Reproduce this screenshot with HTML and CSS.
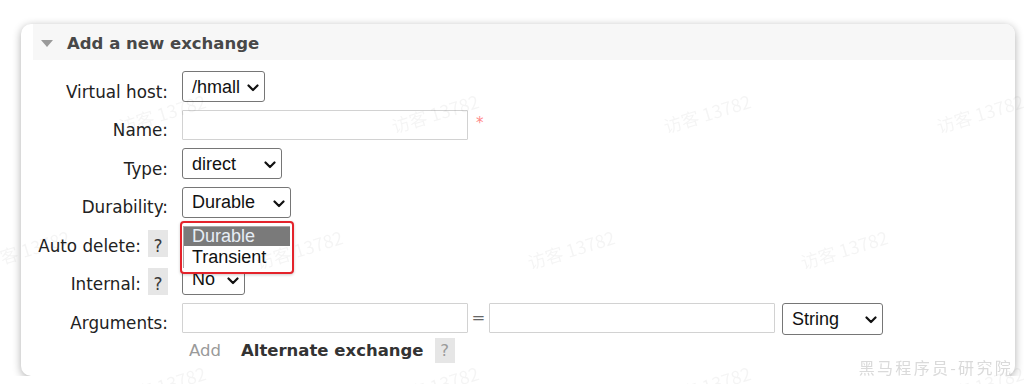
FILE: index.html
```html
<!DOCTYPE html>
<html lang="en">
<head>
<meta charset="utf-8">
<title>Add a new exchange</title>
<link rel="stylesheet" href="styles.css">
</head>
<body>
<div class="card">
  <div class="hdr"><span class="tri"></span><h2>Add a new exchange</h2></div>
  <div class="form">
    <div class="lbl"><span class="lt">Virtual host:</span></div>
    <div class="fld">
      <span class="sel"><select class="w83"><option>/hmall</option></select><svg viewBox="0 0 12 8"><polyline points="1.5,1.5 6,6 10.5,1.5"/></svg></span>
    </div>

    <div class="lbl"><span class="lt">Name:</span></div>
    <div class="fld"><input class="txt" type="text"><span class="req">*</span></div>

    <div class="lbl"><span class="lt">Type:</span></div>
    <div class="fld">
      <span class="sel"><select class="w100"><option>direct</option></select><svg viewBox="0 0 12 8"><polyline points="1.5,1.5 6,6 10.5,1.5"/></svg></span>
    </div>

    <div class="lbl"><span class="lt">Durability:</span></div>
    <div class="fld">
      <span class="sel"><select class="w109"><option>Durable</option></select><svg viewBox="0 0 12 8"><polyline points="1.5,1.5 6,6 10.5,1.5"/></svg>
        <div class="pop">
          <div class="list">
            <div class="opt on">Durable</div>
            <div class="opt">Transient</div>
          </div>
        </div>
      </span>
    </div>

    <div class="lbl"><span class="lt">Auto delete:</span><span class="help">?</span></div>
    <div class="fld">
      <span class="sel"><select class="w63"><option>No</option></select><svg viewBox="0 0 12 8"><polyline points="1.5,1.5 6,6 10.5,1.5"/></svg></span>
    </div>

    <div class="lbl"><span class="lt">Internal:</span><span class="help">?</span></div>
    <div class="fld">
      <span class="sel"><select class="w63"><option>No</option></select><svg viewBox="0 0 12 8"><polyline points="1.5,1.5 6,6 10.5,1.5"/></svg></span>
    </div>

    <div class="lbl"><span class="lt">Arguments:</span></div>
    <div class="fld">
      <input class="txt" type="text"><span class="eq">=</span><input class="txt" type="text">
      <span class="sel gapl"><select class="w101 tall"><option>String</option></select><svg viewBox="0 0 12 8"><polyline points="1.5,1.5 6,6 10.5,1.5"/></svg></span>
    </div>

    <div class="lbl"></div>
    <div class="fld addrow"><span class="add">Add</span><span class="alt">Alternate exchange</span><span class="help2">?</span></div>
  </div>
</div>

<div class="wmlayer">
  <span></span><span class="wm">访客 13782</span><span></span><span class="wm">访客 13782</span><span></span><span class="wm">访客 13782</span><span></span><span class="wm">访客 13782</span>
  <span class="wm">访客 13782</span><span></span><span class="wm">访客 13782</span><span></span><span class="wm">访客 13782</span><span></span><span class="wm">访客 13782</span><span></span>
  <span></span><span class="wm">访客 13782</span><span></span><span class="wm">访客 13782</span><span></span><span class="wm">访客 13782</span><span></span><span class="wm">访客 13782</span>
</div>
<div class="brand">黑马程序员-研究院</div>
</body>
</html>
```

FILE: styles.css
```css
html, body {
  margin: 0;
  background: #fff;
}
body {
  padding: 24px 0 0 21px;
  font-family: "DejaVu Sans", Verdana, sans-serif;
  font-size: 16.5px;
  color: #222;
  overflow: hidden;
}

.card {
  width: 994px;
  height: 352px;
  box-sizing: border-box;
  background: #fff;
  border-radius: 10px;
  box-shadow: 0 2px 8px rgba(0, 0, 0, 0.32);
  padding-left: 12px;
  overflow: hidden;
}

.hdr {
  height: 36px;
  box-sizing: border-box;
  padding: 3px 0 0 8px;
  background: #f7f7f7;
  display: flex;
  align-items: center;
  gap: 14px;
}
.tri {
  width: 0;
  height: 0;
  border-left: 6px solid transparent;
  border-right: 6px solid transparent;
  border-top: 7px solid #9a9a9a;
}
.hdr h2 {
  margin: 0;
  font-size: 16.5px;
  font-weight: bold;
  line-height: 19px;
  color: #484848;
}

.form {
  display: grid;
  grid-template-columns: 135px 1fr;
  column-gap: 14px;
  row-gap: 7.6px;
  grid-auto-rows: 31px;
  margin-top: 11px;
}

.lbl {
  display: flex;
  justify-content: flex-end;
  align-items: flex-start;
  gap: 7px;
}
.lt {
  padding-top: 11.5px;
  line-height: 19px;
  font-size: 16.8px;
  white-space: nowrap;
}
.help {
  margin-top: 4.5px;
  width: 20px;
  height: 27px;
  box-sizing: border-box;
  padding-top: 7px;
  line-height: 19px;
  font-size: 17px;
  text-align: center;
  background: #e6e6e6;
  color: #3a3a3a;
}

.fld {
  display: flex;
  align-items: flex-start;
}

.sel {
  position: relative;
  display: inline-flex;
}
.sel select {
  -webkit-appearance: none;
  appearance: none;
  height: 31px;
  box-sizing: border-box;
  margin: 0;
  padding: 0 0 0 9px;
  border: 1px solid #767676;
  border-radius: 3px;
  background: #fff;
  font-family: "Liberation Sans", Arial, sans-serif;
  font-size: 18px;
  color: #111;
}
.sel select.tall { height: 32px; }
.sel svg {
  position: absolute;
  right: 6px;
  top: 50%;
  margin-top: -2.5px;
  width: 12px;
  height: 8px;
  fill: none;
  stroke: #111;
  stroke-width: 2.2;
  stroke-linecap: round;
  stroke-linejoin: round;
  pointer-events: none;
}
.w83 { width: 83px; }
.w100 { width: 100px; }
.w109 { width: 109px; }
.w63 { width: 63px; }
.w101 { width: 101px; }
.gapl { margin-left: 7px; }

.txt {
  width: 286px;
  height: 30.7px;
  box-sizing: border-box;
  margin: 0;
  padding: 0 4px;
  border: 1px solid #d2d2d2;
  border-radius: 1px;
  background: #fff;
  font-family: "Liberation Sans", Arial, sans-serif;
  font-size: 18px;
}
.req {
  margin-left: 8px;
  padding-top: 4.6px;
  font-size: 15px;
  line-height: 19px;
  color: #f88;
}
.eq {
  width: 21px;
  text-align: center;
  padding-top: 5px;
  line-height: 19px;
  color: #666;
}

.addrow {
  margin-top: -3px;
}
.add {
  padding: 3px 0 0 7px;
  line-height: 19px;
  color: #9a9a9a;
}
.alt {
  margin-left: 20px;
  padding-top: 3px;
  line-height: 19px;
  font-weight: bold;
  color: #333;
}
.help2 {
  margin-left: 11px;
  width: 20px;
  height: 25px;
  box-sizing: border-box;
  padding-top: 3px;
  line-height: 19px;
  text-align: center;
  background: #e6e6e6;
  color: #9a9a9a;
}

/* open dropdown list */
.pop {
  position: absolute;
  left: -2px;
  top: 34px;
  width: 114px;
  height: 53px;
  box-sizing: border-box;
  padding: 3px 2px 0 1px;
  border: 2px solid #e4232b;
  border-radius: 4px;
  background: #fff;
  box-shadow: 0 1px 3px rgba(0, 0, 0, 0.2);
  z-index: 3;
  font-family: "Liberation Sans", Arial, sans-serif;
  font-size: 18px;
  color: #111;
}
.list {
  border-top: 1px solid #a8a8a8;
  border-left: 1px solid #a8a8a8;
}
.opt {
  height: 22px;
  line-height: 22px;
  padding-left: 8px;
}
.opt.on {
  height: 19px;
  line-height: 19px;
  background: #7a7a7a;
  color: #e6edf5;
}

/* watermarks */
.wmlayer {
  position: fixed;
  top: 45px;
  left: -19px;
  display: grid;
  grid-template-columns: repeat(8, 136.3px);
  grid-auto-rows: 136px;
  pointer-events: none;
  z-index: 5;
}
.wm {
  align-self: center;
  justify-self: start;
  white-space: nowrap;
  font-family: "Noto Sans CJK SC", "DejaVu Sans", sans-serif;
  font-size: 18px;
  color: rgba(0, 0, 0, 0.045);
  transform: rotate(-17deg);
}
.brand {
  position: fixed;
  right: 11px;
  bottom: 5px;
  font-family: "Noto Sans CJK SC", sans-serif;
  font-size: 16px;
  letter-spacing: 2.3px;
  color: #dadada;
  z-index: 6;
}
```
